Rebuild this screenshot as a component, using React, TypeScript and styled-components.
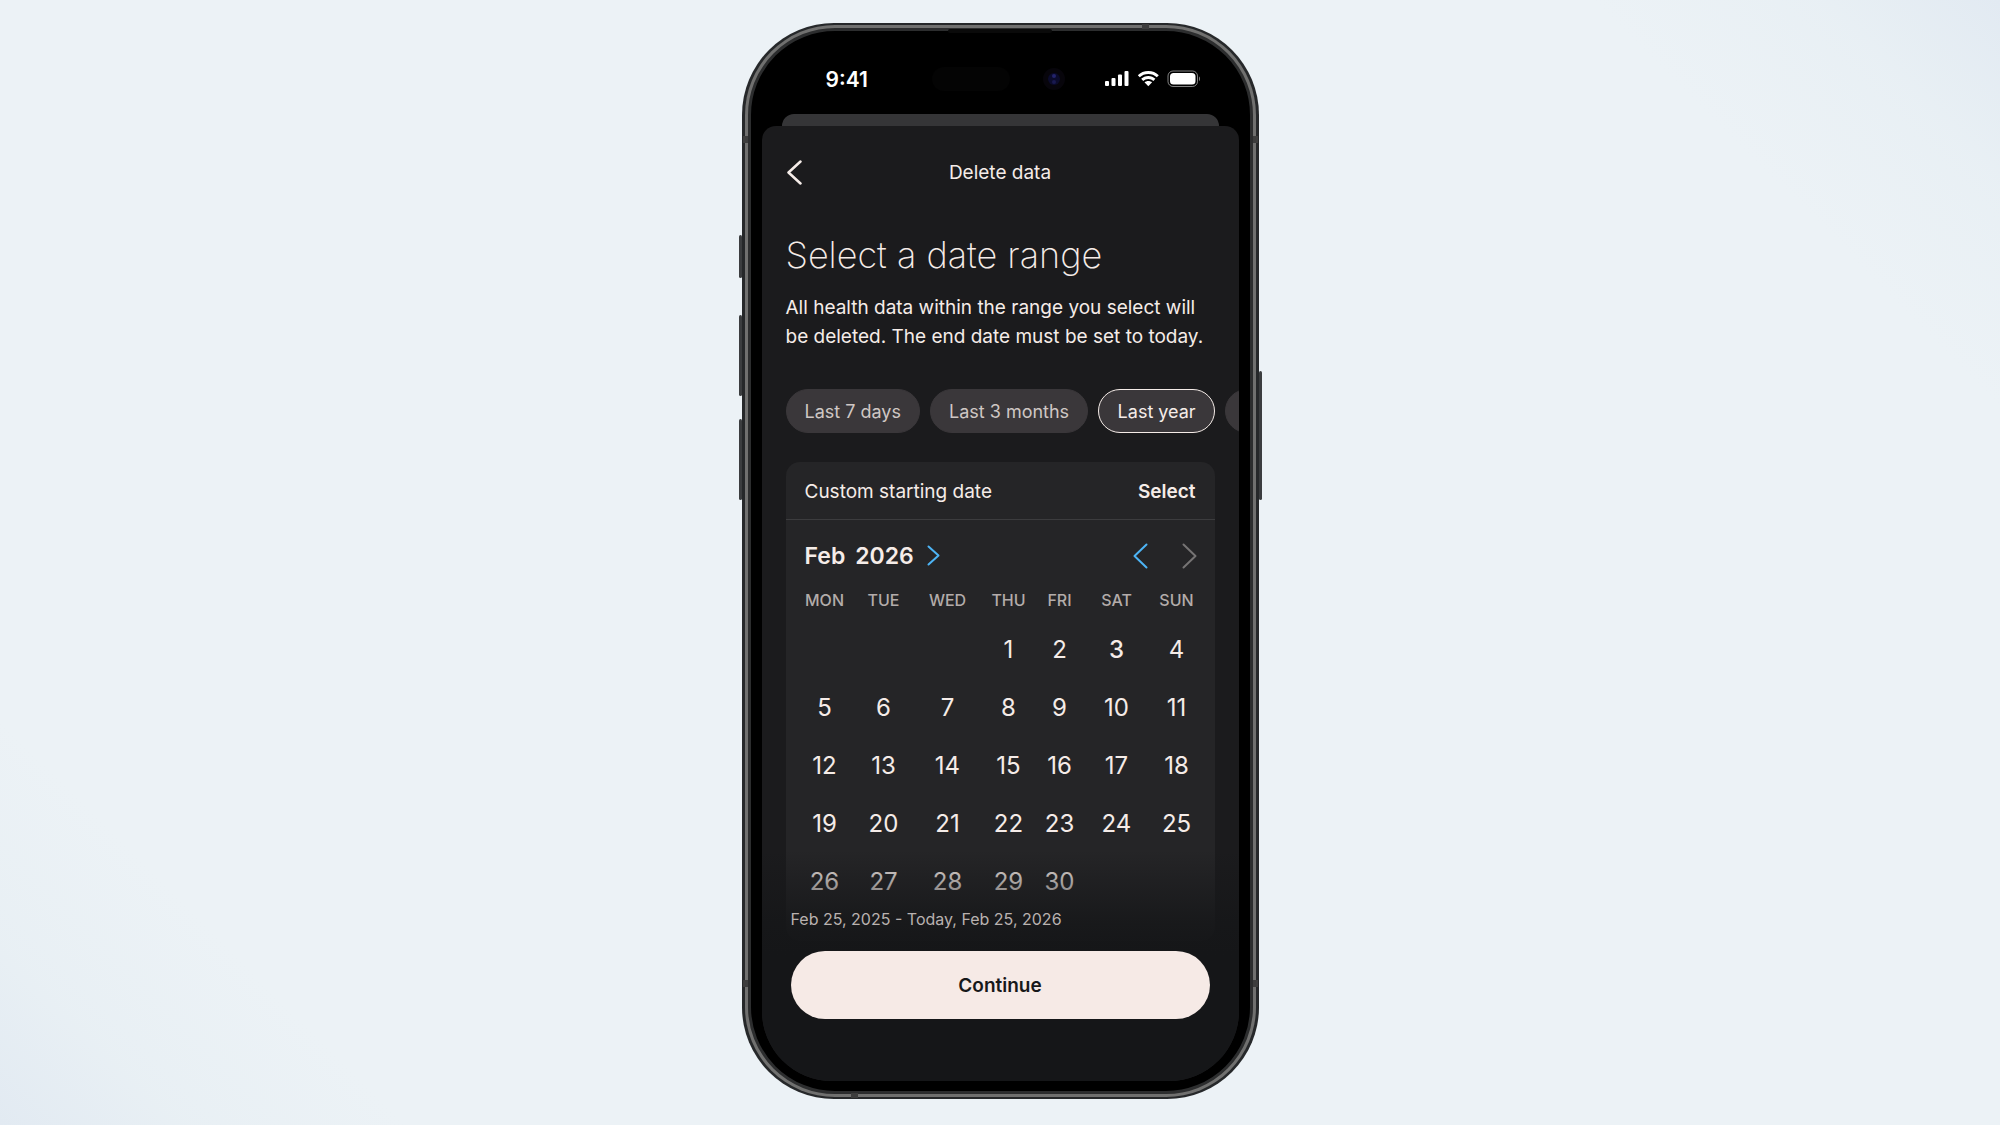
import React from "react";
import styled, { createGlobalStyle } from "styled-components";

const sans = `Inter, "Liberation Sans", sans-serif`;
const ink = "#f5ece8";

const GlobalStyle = createGlobalStyle`
  * { box-sizing: border-box; }
  body { margin: 0; font-family: ${sans}; }
  button { font: inherit; color: inherit; background: none; border: 0; padding: 0; cursor: pointer; }
`;

const Stage = styled.main`
  min-height: 100vh;
  display: flex;
  justify-content: center;
  align-items: flex-start;
  padding: 23px 0 25px;
  background:
    linear-gradient(225deg, #e2eaf2 0%, rgba(230, 238, 243, 0.6) 6%, rgba(232, 240, 244, 0) 13%),
    linear-gradient(45deg, #e2eaf2 0%, rgba(230, 238, 243, 0.6) 6%, rgba(232, 240, 244, 0) 13%),
    #ecf2f6;
`;

const Phone = styled.div`
  position: relative;
  width: 517px;
  padding: 2px 3px;
  border-radius: 92px;
  background: #26282a;
`;

const Rim = styled.div`
  padding: 3px;
  border-radius: 90px;
  background: #70706f;
`;

const Bezel = styled.div`
  padding: 9px 11px 10px;
  border: 3px solid #2c2d2e;
  border-radius: 87px;
  background: #000;
`;

const SideKey = styled.span<{ $side: "left" | "right"; $top: number; $height: number }>`
  position: absolute;
  ${(p) => p.$side}: -3px;
  top: ${(p) => p.$top}px;
  width: 3px;
  height: ${(p) => p.$height}px;
  border-radius: 2px;
  background: #3b3d3f;
`;

const Antenna = styled.span<{ $side: "left" | "right"; $top: number }>`
  position: absolute;
  ${(p) => p.$side}: 1px;
  top: ${(p) => p.$top}px;
  width: 5px;
  height: 7px;
  background: #3d3d3d;
`;

const EdgeAntenna = styled.span<{ $edge: "top" | "bottom"; $left: number }>`
  position: absolute;
  ${(p) => p.$edge}: 1px;
  left: ${(p) => p.$left}px;
  width: 7px;
  height: 5px;
  background: #3d3d3d;
`;

const Earpiece = styled.span`
  position: absolute;
  top: 6px;
  left: 50%;
  width: 104px;
  height: 4px;
  margin-left: -52px;
  border-radius: 2px;
  background: #0a0a0a;
`;

const Screen = styled.div`
  display: flex;
  flex-direction: column;
  height: 1041px;
  border-radius: 60px 60px 70px 70px;
  overflow: hidden;
`;

const StatusBar = styled.header`
  flex: none;
  display: grid;
  grid-template-columns: 1fr 134px 1fr;
  align-items: center;
  height: 74px;
  padding: 4px 38px 0 64px;
  color: #fff;
`;

const Time = styled.span`
  font-size: 21px;
  font-weight: 600;
`;

const Island = styled.div`
  display: flex;
  justify-content: space-between;
  align-items: center;
  width: 134px;
  margin-left: -14px;
`;

const Sensor = styled.span`
  width: 78px;
  height: 24px;
  border-radius: 12px;
  background: #040404;
`;

const StatusIcons = styled.div`
  display: flex;
  justify-content: flex-end;
`;

const BackSheet = styled.div`
  flex: none;
  height: 12px;
  margin: 0 20px;
  border-radius: 12px 12px 0 0;
  background: #353537;
`;

const Sheet = styled.section`
  position: relative;
  flex: 1;
  display: flex;
  flex-direction: column;
  border-radius: 14px 14px 0 0;
  background: #1b1b1d;
  overflow: hidden;
`;

const NavBar = styled.nav`
  display: grid;
  grid-template-columns: 40px 1fr 40px;
  align-items: center;
  height: 93px;
  padding: 0 25px;
  color: ${ink};
`;

const NavTitle = styled.h1`
  margin: 0;
  text-align: center;
  font-size: 19px;
  font-weight: 400;
`;

const IconButton = styled.button`
  display: flex;
`;

const Intro = styled.div`
  padding: 12px 24px 0;
  color: ${ink};
`;

const Title = styled.h2`
  margin: 0;
  font-size: 36px;
  line-height: 48px;
  font-weight: 200;
`;

const Lead = styled.p`
  margin: 14px 0 0;
  font-size: 19px;
  line-height: 29px;
  white-space: nowrap;
`;

const Chips = styled.div`
  display: flex;
  gap: 10px;
  padding: 38px 0 0 24px;
  overflow: hidden;
`;

const Chip = styled.button<{ $active?: boolean }>`
  flex: none;
  height: 44px;
  min-width: 117px;
  padding: 0 18px;
  border: 1px solid ${(p) => (p.$active ? ink : "#3a373a")};
  border-radius: 22px;
  background: #3a373a;
  color: ${(p) => (p.$active ? ink : "#cfc7c4")};
  font-size: 18px;
  white-space: nowrap;
`;

const Card = styled.div`
  margin: 29px 24px 0;
  padding-bottom: 30px;
  border-radius: 14px;
  background: #252527;
  color: ${ink};
`;

const CardHead = styled.div`
  display: flex;
  justify-content: space-between;
  align-items: center;
  height: 58px;
  padding: 2px 19px 0;
  border-bottom: 1px solid #3c3c3e;
  font-size: 19px;
`;

const SelectButton = styled.button`
  font-weight: 600;
`;

const MonthBar = styled.div`
  display: flex;
  align-items: center;
  height: 71px;
  padding: 0 18px 0 19px;
`;

const MonthButton = styled.button`
  display: flex;
  align-items: center;
  gap: 10px;
  margin-right: auto;
  font-size: 23px;
  font-weight: 600;

  svg { margin-left: 3px; }
`;

const Arrows = styled.div`
  display: flex;
  gap: 34px;
`;

const Calendar = styled.table`
  width: 408px;
  margin-left: 10px;
  table-layout: fixed;
  border-collapse: collapse;
  text-align: center;
`;

const WeekDay = styled.th`
  height: 30px;
  padding: 0;
  vertical-align: top;
  color: #b3acaa;
  font-size: 16px;
  line-height: 18px;
  font-weight: 500;
`;

const Day = styled.td`
  height: 58px;
  padding: 0;
`;

const DayButton = styled.button<{ $strong?: boolean }>`
  font-size: 24px;
  line-height: 30px;
  font-weight: ${(p) => (p.$strong ? 500 : 400)};
`;

const Footer = styled.footer`
  position: absolute;
  left: 0;
  right: 0;
  bottom: 0;
  padding: 56px 29px 62px;
  background: linear-gradient(rgba(21, 22, 24, 0) 0, rgba(21, 22, 24, 0.8) 72px, #151618 104px);
`;

const Range = styled.p`
  margin: 0 0 20px;
  color: #b9b2b0;
  font-size: 16px;
  line-height: 24px;
`;

const Continue = styled.button`
  display: block;
  width: 100%;
  height: 68px;
  border-radius: 34px;
  background: #f6eae6;
  color: #17181a;
  font-size: 19px;
  font-weight: 600;
`;

type ChevronProps = { dir: "left" | "right"; color: string; w: number; h: number; stroke: number };

const Chevron = ({ dir, color, w, h, stroke }: ChevronProps) => (
  <svg width={w} height={h} viewBox={`0 0 ${w} ${h}`} fill="none" stroke={color} strokeWidth={stroke} strokeLinecap="round" strokeLinejoin="round">
    <path d={dir === "left" ? `M${w - 1.5} 1.5L1.5 ${h / 2}L${w - 1.5} ${h - 1.5}` : `M1.5 1.5L${w - 1.5} ${h / 2}L1.5 ${h - 1.5}`} />
  </svg>
);

const Status = () => (
  <svg width="96" height="18" viewBox="0 0 96 18">
    <g fill="#fff">
      <rect x="0" y="11" width="4" height="5" rx="1" />
      <rect x="6.500" y="8" width="4" height="8" rx="1" />
      <rect x="13" y="4.500" width="4" height="11.500" rx="1" />
      <rect x="19.500" y="1" width="4" height="15" rx="1" />
      <path d="M43.300 1C39.200 1 35.500 2.600 32.800 5.200L34.800 7.300C37 5.200 40 4 43.300 4C46.600 4 49.600 5.200 51.800 7.300L53.800 5.200C51.100 2.600 47.400 1 43.300 1Z" />
      <path d="M43.300 6C40.500 6 38 7.100 36.200 8.800L38.200 10.900C39.500 9.700 41.300 8.900 43.300 8.900C45.300 8.900 47.100 9.700 48.400 10.900L50.400 8.800C48.600 7.100 46.100 6 43.300 6Z" />
      <path d="M43.300 10.900C41.800 10.900 40.500 11.500 39.500 12.300L43.300 16.200L47.100 12.300C46.100 11.500 44.800 10.900 43.300 10.900Z" />
      <rect x="65" y="3" width="25.500" height="11.500" rx="3.500" />
      <path d="M94 6.500C95.300 7 95.300 10.500 94 11Z" opacity="0.500" />
    </g>
    <rect x="63" y="1" width="29.500" height="15.500" rx="5" fill="none" stroke="#fff" strokeOpacity="0.500" />
  </svg>
);

const Camera = () => (
  <svg width="24" height="24" viewBox="0 0 24 24">
    <circle cx="12" cy="12" r="11" fill="#07050b" />
    <circle cx="12" cy="12" r="6" fill="#0b0b2c" />
    <circle cx="12" cy="9" r="2" fill="#23236b" />
    <circle cx="12" cy="15" r="2" fill="#191950" />
  </svg>
);

const weekdays = ["MON", "TUE", "WED", "THU", "FRI", "SAT", "SUN"];
const columns = [58, 60, 68, 54, 48, 66, 54];
const weeks = Array.from({ length: 5 }, (_, w) =>
  Array.from({ length: 7 }, (_, d) => {
    const day = w * 7 + d - 2;
    return day >= 1 && day <= 30 ? day : null;
  }),
);

export default function App() {
  return (
    <>
      <GlobalStyle />
      <Stage>
        <Phone>
          <SideKey $side="left" $top={212} $height={43} />
          <SideKey $side="left" $top={292} $height={81} />
          <SideKey $side="left" $top={396} $height={81} />
          <SideKey $side="right" $top={348} $height={129} />
          <Rim>
            <Bezel>
              <Screen>
                <StatusBar>
                  <Time>9:41</Time>
                  <Island><Sensor /><Camera /></Island>
                  <StatusIcons><Status /></StatusIcons>
                </StatusBar>
                <BackSheet />
                <Sheet>
                  <NavBar>
                    <IconButton aria-label="Back"><Chevron dir="left" color={ink} w={15} h={25} stroke={2.5} /></IconButton>
                    <NavTitle>Delete data</NavTitle>
                  </NavBar>
                  <Intro>
                    <Title>Select a date range</Title>
                    <Lead>All health data within the range you select will<br />be deleted. The end date must be set to today.</Lead>
                  </Intro>
                  <Chips>
                    <Chip>Last 7 days</Chip>
                    <Chip>Last 3 months</Chip>
                    <Chip $active>Last year</Chip>
                    <Chip aria-label="More ranges" />
                  </Chips>
                  <Card>
                    <CardHead>
                      <span>Custom starting date</span>
                      <SelectButton>Select</SelectButton>
                    </CardHead>
                    <MonthBar>
                      <MonthButton>
                        <span>Feb</span>
                        <span>2026</span>
                        <Chevron dir="right" color="#4db4f5" w={13} h={21} stroke={2} />
                      </MonthButton>
                      <Arrows>
                        <IconButton aria-label="Previous month"><Chevron dir="left" color="#4db4f5" w={15} h={26} stroke={2} /></IconButton>
                        <IconButton aria-label="Next month"><Chevron dir="right" color="#767474" w={15} h={26} stroke={2} /></IconButton>
                      </Arrows>
                    </MonthBar>
                    <Calendar>
                      <colgroup>{columns.map((w, i) => <col key={i} width={w} />)}</colgroup>
                      <thead>
                        <tr>{weekdays.map((d) => <WeekDay key={d} scope="col">{d}</WeekDay>)}</tr>
                      </thead>
                      <tbody>
                        {weeks.map((week, i) => (
                          <tr key={i}>
                            {week.map((day, j) => <Day key={j}>{day && <DayButton $strong={day === 3}>{day}</DayButton>}</Day>)}
                          </tr>
                        ))}
                      </tbody>
                    </Calendar>
                  </Card>
                  <Footer>
                    <Range>Feb 25, 2025 - Today, Feb 25, 2026</Range>
                    <Continue>Continue</Continue>
                  </Footer>
                </Sheet>
              </Screen>
            </Bezel>
          </Rim>
          <Antenna $side="left" $top={113} />
          <Antenna $side="right" $top={113} />
          <Antenna $side="left" $top={957} />
          <Antenna $side="right" $top={957} />
          <EdgeAntenna $edge="top" $left={400} />
          <EdgeAntenna $edge="bottom" $left={109} />
          <Earpiece />
        </Phone>
      </Stage>
    </>
  );
}
